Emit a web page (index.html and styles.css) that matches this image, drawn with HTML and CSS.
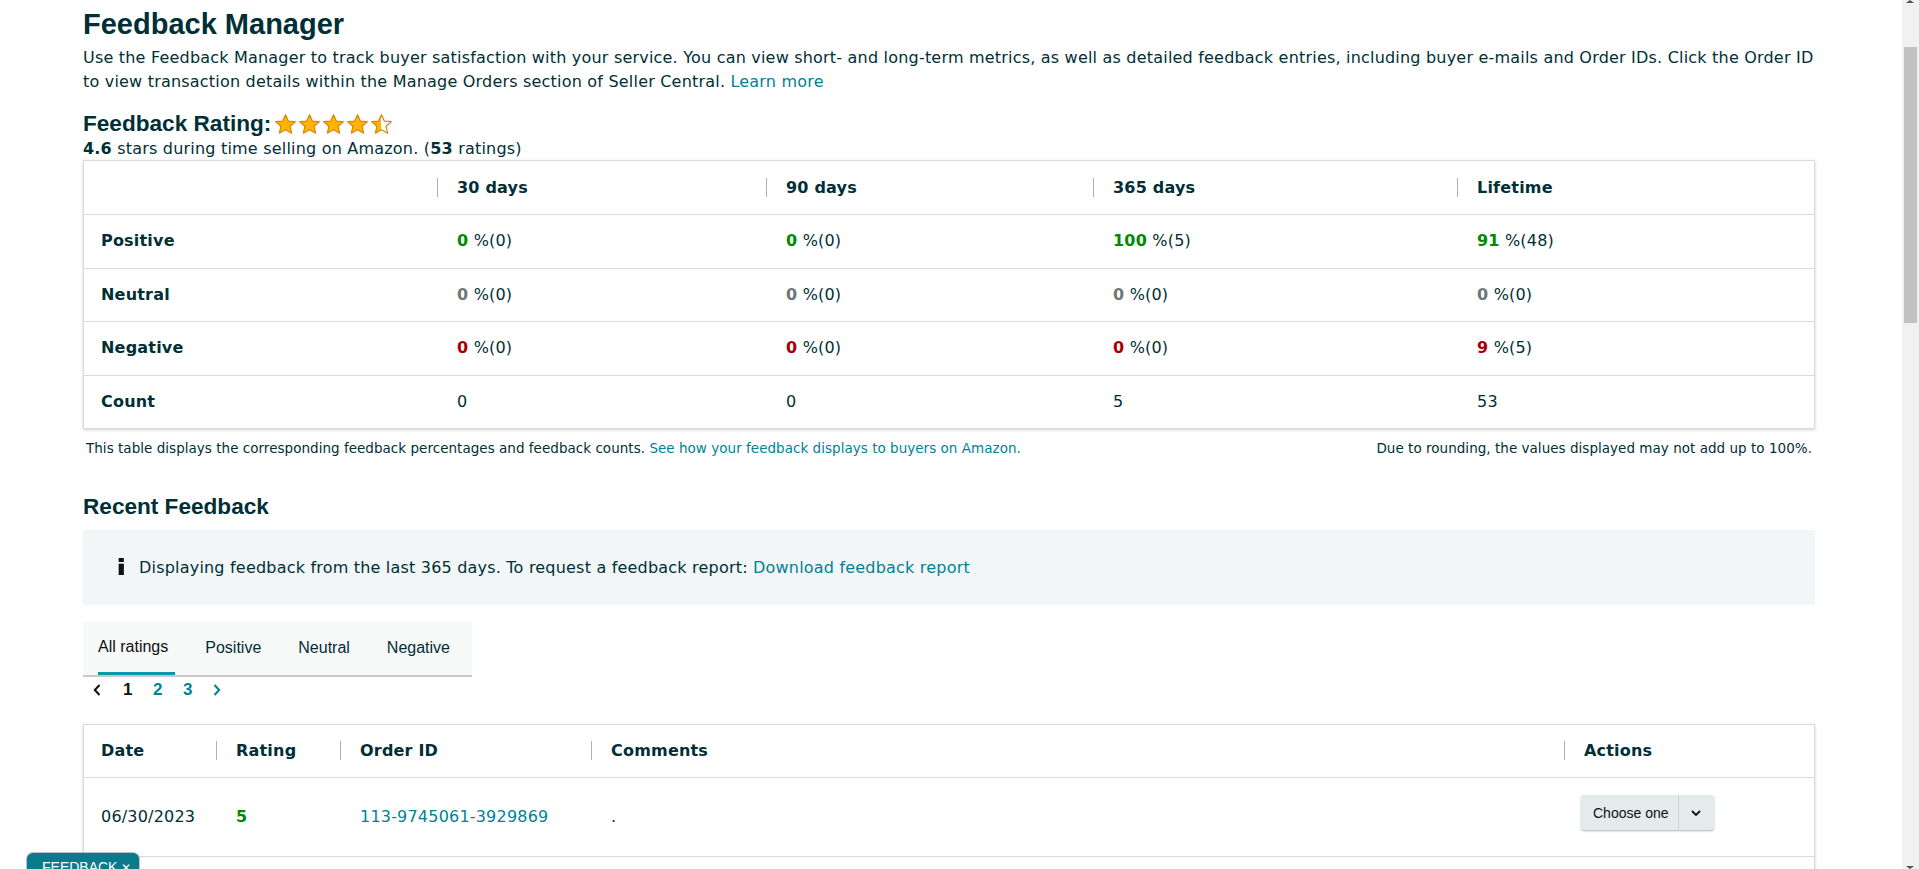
FILE: index.html
```html
<!DOCTYPE html>
<html lang="en">
<head>
<meta charset="utf-8">
<title>Feedback Manager</title>
<link rel="stylesheet" href="styles.css">
</head>
<body>
<main class="page">
  <h1 class="title">Feedback Manager</h1>
  <p class="intro">Use the Feedback Manager to track buyer satisfaction with your service. You can view short- and long-term metrics, as well as detailed feedback entries, including buyer e-mails and Order IDs. Click the Order ID to view transaction details within the Manage Orders section of Seller Central. <a href="#" class="link">Learn more</a></p>

  <div class="rating-head">
    <h2 class="h2">Feedback Rating:</h2>
    <span class="stars">
      <svg class="star" viewBox="0 0 24 24"><path d="M12 1.8 15 8.4 22.2 9.1 16.8 13.9 18.4 21.1 12 17.4 5.6 21.1 7.2 13.9 1.8 9.1 9 8.4Z"/></svg>
      <svg class="star" viewBox="0 0 24 24"><path d="M12 1.8 15 8.4 22.2 9.1 16.8 13.9 18.4 21.1 12 17.4 5.6 21.1 7.2 13.9 1.8 9.1 9 8.4Z"/></svg>
      <svg class="star" viewBox="0 0 24 24"><path d="M12 1.8 15 8.4 22.2 9.1 16.8 13.9 18.4 21.1 12 17.4 5.6 21.1 7.2 13.9 1.8 9.1 9 8.4Z"/></svg>
      <svg class="star" viewBox="0 0 24 24"><path d="M12 1.8 15 8.4 22.2 9.1 16.8 13.9 18.4 21.1 12 17.4 5.6 21.1 7.2 13.9 1.8 9.1 9 8.4Z"/></svg>
      <svg class="star half" viewBox="0 0 24 24"><defs><linearGradient id="halfg" x1="0" x2="1" y1="0" y2="0"><stop offset="0.5" stop-color="#ffb400"/><stop offset="0.5" stop-color="#ffffff"/></linearGradient></defs><path d="M12 1.8 15 8.4 22.2 9.1 16.8 13.9 18.4 21.1 12 17.4 5.6 21.1 7.2 13.9 1.8 9.1 9 8.4Z"/></svg>
    </span>
  </div>
  <div class="rating-sub"><b>4.6</b> stars during time selling on Amazon. (<b>53</b> ratings)</div>

  <div class="card stats">
    <div class="srow shead">
      <div class="scell"></div>
      <div class="scell"><span class="sep"></span><span>30 days</span></div>
      <div class="scell"><span class="sep"></span><span>90 days</span></div>
      <div class="scell"><span class="sep"></span><span>365 days</span></div>
      <div class="scell"><span class="sep"></span><span>Lifetime</span></div>
    </div>
    <div class="srow">
      <div class="scell label">Positive</div>
      <div class="scell"><span><b class="pos">0</b> %(0)</span></div>
      <div class="scell"><span><b class="pos">0</b> %(0)</span></div>
      <div class="scell"><span><b class="pos">100</b> %(5)</span></div>
      <div class="scell"><span><b class="pos">91</b> %(48)</span></div>
    </div>
    <div class="srow">
      <div class="scell label">Neutral</div>
      <div class="scell"><span><b class="neu">0</b> %(0)</span></div>
      <div class="scell"><span><b class="neu">0</b> %(0)</span></div>
      <div class="scell"><span><b class="neu">0</b> %(0)</span></div>
      <div class="scell"><span><b class="neu">0</b> %(0)</span></div>
    </div>
    <div class="srow">
      <div class="scell label">Negative</div>
      <div class="scell"><span><b class="neg">0</b> %(0)</span></div>
      <div class="scell"><span><b class="neg">0</b> %(0)</span></div>
      <div class="scell"><span><b class="neg">0</b> %(0)</span></div>
      <div class="scell"><span><b class="neg">9</b> %(5)</span></div>
    </div>
    <div class="srow">
      <div class="scell label">Count</div>
      <div class="scell">0</div>
      <div class="scell">0</div>
      <div class="scell">5</div>
      <div class="scell">53</div>
    </div>
  </div>
  <div class="note">
    <span>This table displays the corresponding feedback percentages and feedback counts. <a href="#" class="link">See how your feedback displays to buyers on Amazon.</a></span>
    <span>Due to rounding, the values displayed may not add up to 100%.</span>
  </div>

  <h2 class="h2 section">Recent Feedback</h2>
  <div class="info">
    <svg class="info-icon" viewBox="0 0 7 18"><rect x="0.5" y="0" width="5.5" height="4.2" rx="0.6"/><rect x="0.5" y="6" width="5.5" height="12"/></svg>
    <span>Displaying feedback from the last 365 days. To request a feedback report: <a href="#" class="link">Download feedback report</a></span>
  </div>

  <div class="tabs">
    <span class="tab active">All ratings</span>
    <span class="tab">Positive</span>
    <span class="tab">Neutral</span>
    <span class="tab">Negative</span>
  </div>
  <div class="pager">
    <svg class="chev dark" viewBox="0 0 8 12"><path d="M6.5 1 1.8 6 6.5 11"/></svg>
    <span class="pnum current">1</span>
    <span class="pnum">2</span>
    <span class="pnum">3</span>
    <svg class="chev" viewBox="0 0 8 12"><path d="M1.5 1 6.2 6 1.5 11"/></svg>
  </div>

  <div class="card fb">
    <div class="frow fhead">
      <div class="fcell">Date</div>
      <div class="fcell"><span class="sep"></span><span>Rating</span></div>
      <div class="fcell"><span class="sep"></span><span>Order ID</span></div>
      <div class="fcell"><span class="sep"></span><span>Comments</span></div>
      <div class="fcell"><span class="sep"></span><span>Actions</span></div>
    </div>
    <div class="frow fbody">
      <div class="fcell">06/30/2023</div>
      <div class="fcell"><b class="pos">5</b></div>
      <div class="fcell"><a href="#" class="link">113-9745061-3929869</a></div>
      <div class="fcell">.</div>
      <div class="fcell">
        <span class="choose"><span class="choose-text">Choose one</span><span class="choose-arrow"><svg viewBox="0 0 10 6"><path d="M1 1 5 5 9 1"/></svg></span></span>
      </div>
    </div>
    <div class="frow fbody"></div>
  </div>
</main>

<div class="feedback-tab">FEEDBACK <span class="x">✕</span></div>

<div class="scrollbar">
  <span class="sb-up"></span>
  <span class="sb-thumb"></span>
  <span class="sb-down"></span>
</div>
</body>
</html>
```

FILE: styles.css
```css
html, body {
  margin: 0;
  padding: 0;
  overflow: hidden;
  background: #ffffff;
}

body {
  font-family: "DejaVu Sans", Verdana, sans-serif;
  font-size: 16px;
  line-height: 24px;
  letter-spacing: 0.2px;
  color: #002f36;
}

.page {
  margin-left: 83px;
  width: 1732px;
}

.link {
  color: #008296;
  text-decoration: none;
}

.title {
  font-family: "Liberation Sans", Arial, sans-serif;
  font-size: 29px;
  line-height: 34px;
  font-weight: 700;
  letter-spacing: 0;
  margin: 7px 0 0;
  color: #002f36;
}

.intro {
  margin: 5px 0 0;
}

.h2 {
  font-family: "Liberation Sans", Arial, sans-serif;
  font-size: 22.6px;
  line-height: 26px;
  font-weight: 700;
  letter-spacing: 0;
  margin: 0;
  color: #002f36;
}

.rating-head {
  display: flex;
  align-items: center;
  margin-top: 17px;
  height: 26px;
}

.stars {
  display: flex;
  gap: 1px;
  margin-left: 3px;
}

.star {
  width: 23px;
  height: 23px;
}

.star path {
  fill: #ffb400;
  stroke: #d68a0c;
  stroke-width: 1.3;
  stroke-linejoin: round;
}

.star.half path {
  fill: url(#halfg);
}

.rating-sub {
  line-height: 23px;
}

.rating-sub b {
  font-weight: 700;
}

.card {
  border: 1px solid #d5dbdb;
  box-shadow: 0 1px 3px rgba(0, 0, 0, 0.18);
  background: #fff;
}

.stats .srow {
  display: grid;
  grid-template-columns: 353px 329px 327px 364px 1fr;
  height: 53.5px;
  border-top: 1px solid #d5dbdb;
  box-sizing: border-box;
}

.stats .srow.shead {
  border-top: 0;
  height: 53px;
}

.scell {
  position: relative;
  display: flex;
  align-items: center;
  padding-left: 20px;
}

.scell.label,
.shead .scell {
  font-weight: 700;
}

.scell.label {
  padding-left: 17px;
}

.sep {
  position: absolute;
  left: 0;
  top: 50%;
  width: 1px;
  height: 19px;
  margin-top: -10px;
  background: #a6b2b3;
}

.pos { color: #008a00; font-weight: 700; }
.neu { color: #6c7778; font-weight: 700; }
.neg { color: #a80000; font-weight: 700; }

.note {
  display: flex;
  justify-content: space-between;
  font-size: 13.5px;
  line-height: 20px;
  letter-spacing: 0.03px;
  margin-top: 9px;
  padding: 0 3px;
}

.section {
  margin-top: 36px;
}

.info {
  margin-top: 10px;
  height: 75px;
  background: #f3f6f6;
  display: flex;
  align-items: center;
  padding-left: 35px;
  box-sizing: border-box;
}

.info-icon {
  width: 7px;
  height: 17px;
  margin-right: 14px;
  margin-top: -2px;
  fill: #111;
}

.tabs {
  margin-top: 17px;
  display: flex;
  width: max-content;
  height: 53px;
  background: #f7f8f8;
  border-bottom: 2px solid #c4c9c9;
  align-items: stretch;
  padding: 0 22px 0 15px;
  font-family: "Liberation Sans", Arial, sans-serif;
  font-size: 16px;
  letter-spacing: 0;
  color: #002f36;
}

.tab {
  display: flex;
  align-items: center;
  margin-right: 37px;
  padding-top: 1px;
  box-sizing: border-box;
  border-bottom: 3px solid transparent;
}

.tab:last-child {
  margin-right: 0;
}

.tab.active {
  color: #0f1111;
  border-bottom-color: #0799ab;
  padding: 0 7px 0 0;
  margin-right: 30px;
}

.pager {
  display: flex;
  align-items: center;
  height: 20px;
  margin-top: 3px;
  padding-left: 10px;
}

.chev {
  width: 8px;
  height: 12px;
  fill: none;
  stroke: #008296;
  stroke-width: 2;
}

.chev.dark {
  stroke: #0f1111;
  margin-right: 22px;
}

.pnum {
  font-family: "Liberation Sans", Arial, sans-serif;
  font-weight: 700;
  font-size: 17px;
  letter-spacing: 0;
  color: #008296;
  width: 30px;
}

.pnum.current {
  color: #0f1111;
}

.fb {
  margin-top: 24px;
}

.frow {
  display: grid;
  grid-template-columns: 132px 124px 251px 973px 1fr;
  box-sizing: border-box;
}

.fhead {
  height: 52px;
  font-weight: 700;
}

.fbody {
  height: 79px;
  border-top: 1px solid #d5dbdb;
}

.fcell {
  position: relative;
  display: flex;
  align-items: center;
  padding-left: 20px;
}

.frow .fcell:first-child {
  padding-left: 17px;
}

.choose {
  display: inline-flex;
  height: 35px;
  margin-top: -9px;
  margin-left: -3px;
  background: #e3ebec;
  border-radius: 3px;
  box-shadow: 0 1px 2px rgba(0, 0, 0, 0.3);
  font-family: "Liberation Sans", Arial, sans-serif;
  font-size: 14px;
  letter-spacing: 0;
  color: #0f1111;
  white-space: nowrap;
}

.choose-text {
  display: flex;
  align-items: center;
  padding: 0 9px 0 12px;
  border-right: 1px solid #ccd5d6;
}

.choose-arrow {
  display: flex;
  align-items: center;
  justify-content: center;
  width: 35px;
}

.choose-arrow svg {
  width: 10px;
  height: 6px;
  fill: none;
  stroke: #0f1111;
  stroke-width: 1.8;
}

.feedback-tab {
  position: fixed;
  left: 26px;
  top: 852px;
  width: 114px;
  height: 30px;
  box-sizing: border-box;
  background: #0b7b8b;
  border: 1px solid #b9c6c8;
  border-bottom: 0;
  border-radius: 7px 7px 0 0;
  color: #fff;
  font-family: "Liberation Sans", Arial, sans-serif;
  font-size: 14px;
  line-height: 14px;
  letter-spacing: 0;
  padding: 7px 0 0 15px;
  white-space: nowrap;
}

.feedback-tab .x {
  font-size: 12px;
}

.scrollbar {
  position: fixed;
  right: 0;
  top: 0;
  width: 17px;
  height: 100%;
  background: #f1f1f1;
}

.sb-thumb {
  position: absolute;
  left: 2px;
  top: 47px;
  width: 13px;
  height: 276px;
  background: #c1c1c1;
}

.sb-up,
.sb-down {
  position: absolute;
  left: 4px;
  width: 0;
  height: 0;
  border-left: 4px solid transparent;
  border-right: 4px solid transparent;
}

.sb-up {
  top: 0;
  border-bottom: 3px solid #505050;
}

.sb-down {
  bottom: 0;
  border-top: 3px solid #505050;
}
```
